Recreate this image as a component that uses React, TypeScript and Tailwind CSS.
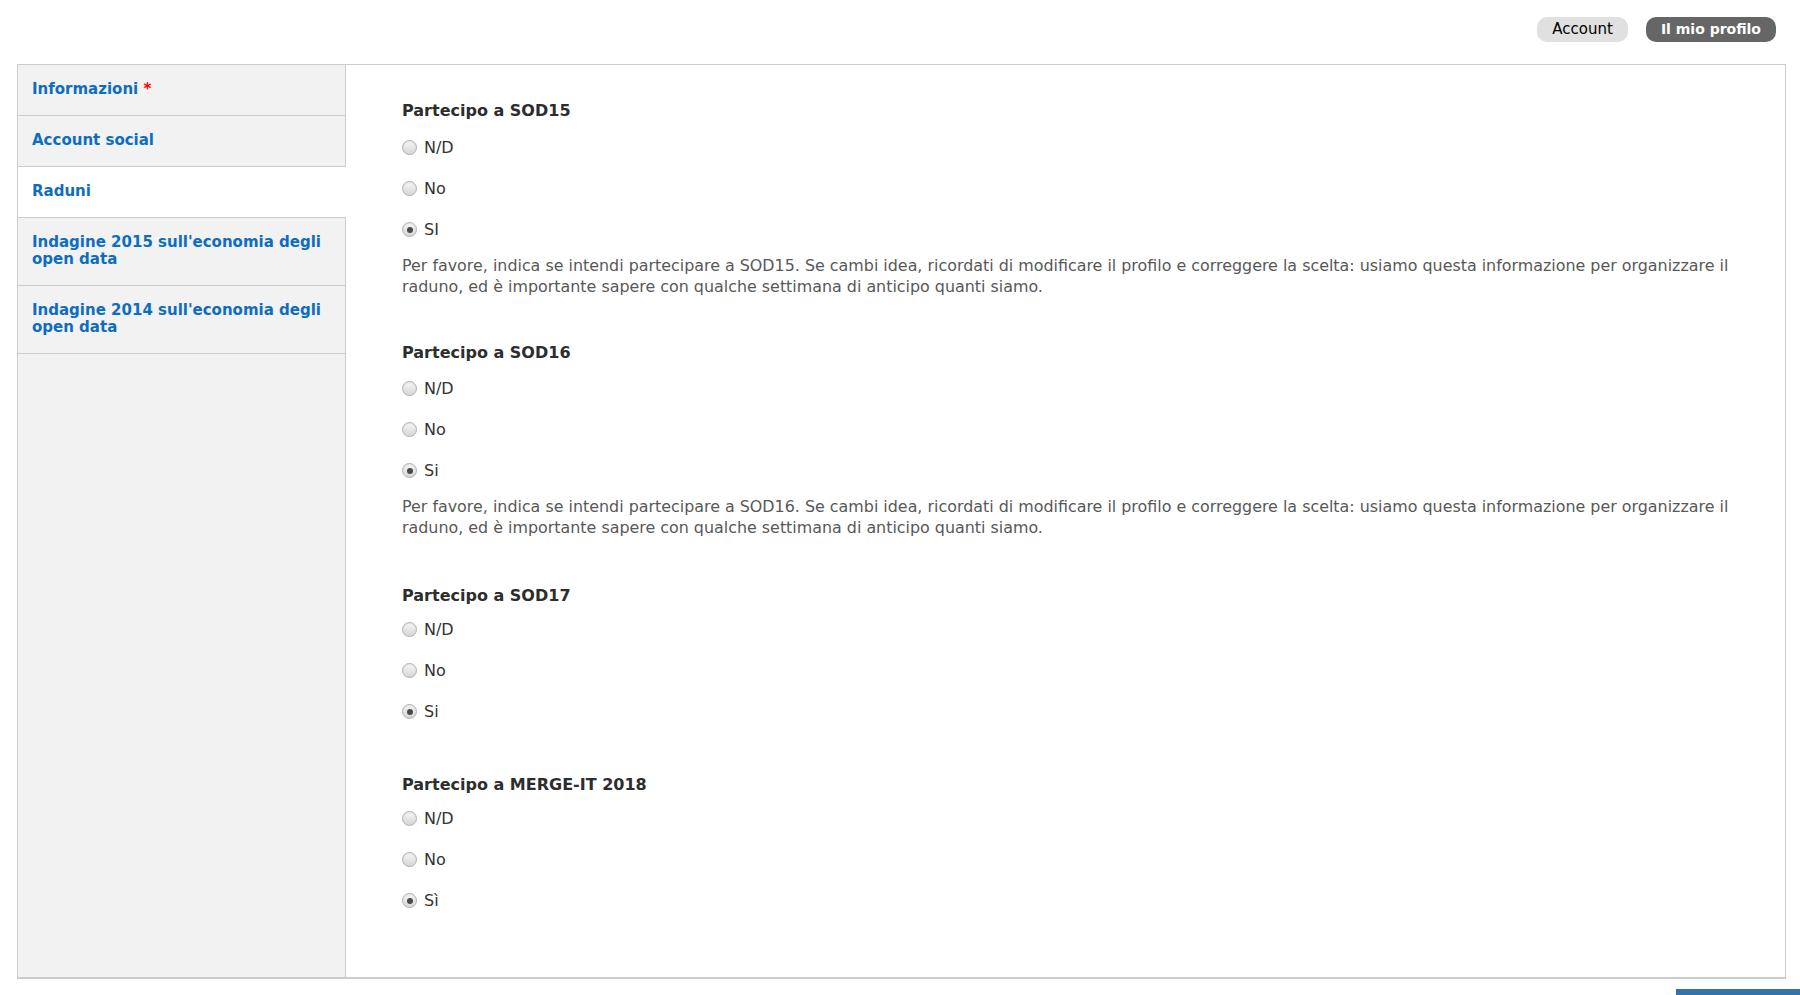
import React from "react";

type Opt = { label: string; checked?: boolean };
type Block = { title: string; options: Opt[]; desc?: string; headMb: string; blockMb: string };

const blocks: Block[] = [
  {
    title: "Partecipo a SOD15",
    options: [{ label: "N/D" }, { label: "No" }, { label: "SI", checked: true }],
    desc: "Per favore, indica se intendi partecipare a SOD15. Se cambi idea, ricordati di modificare il profilo e correggere la scelta: usiamo questa informazione per organizzare il raduno, ed è importante sapere con qualche settimana di anticipo quanti siamo.",
    headMb: "mb-[6px]",
    blockMb: "mb-[46px]",
  },
  {
    title: "Partecipo a SOD16",
    options: [{ label: "N/D" }, { label: "No" }, { label: "Si", checked: true }],
    desc: "Per favore, indica se intendi partecipare a SOD16. Se cambi idea, ricordati di modificare il profilo e correggere la scelta: usiamo questa informazione per organizzare il raduno, ed è importante sapere con qualche settimana di anticipo quanti siamo.",
    headMb: "mb-[5px]",
    blockMb: "mb-[48px]",
  },
  {
    title: "Partecipo a SOD17",
    options: [{ label: "N/D" }, { label: "No" }, { label: "Si", checked: true }],
    headMb: "mb-[3px]",
    blockMb: "mb-[43px]",
  },
  {
    title: "Partecipo a MERGE-IT 2018",
    options: [{ label: "N/D" }, { label: "No" }, { label: "Sì", checked: true }],
    headMb: "mb-[3px]",
    blockMb: "",
  },
];

function Radio({ checked }: { checked?: boolean }) {
  return (
    <span className="flex h-[15px] w-[15px] shrink-0 items-center justify-center rounded-full border border-[#b0b0b0] bg-linear-to-b from-[#f7f7f7] to-[#d6d6d6] shadow-[inset_0_1px_1px_rgba(0,0,0,0.08)]">
      {checked && <span className="h-[6px] w-[6px] rounded-full bg-[#4a4a4a]" />}
    </span>
  );
}

const tabs = [
  { label: "Informazioni", required: true },
  { label: "Account social" },
  { label: "Raduni", active: true },
  { label: "Indagine 2015 sull'economia degli open data" },
  { label: "Indagine 2014 sull'economia degli open data" },
];

export default function App() {
  return (
    <div className="min-h-screen bg-white font-['DejaVu_Sans',sans-serif]">
      <div className="flex justify-end gap-[18px] pr-[24px] pt-[17px]">
        <span className="h-[25px] rounded-[10px] bg-[#e0e0e0] px-[15px] text-[15px] leading-[25px] text-black">
          Account
        </span>
        <span className="h-[25px] rounded-[10px] bg-[#666666] px-[15px] text-[14px] font-bold leading-[25px] text-white">
          Il mio profilo
        </span>
      </div>

      <div className="ml-[17px] mr-[14px] mt-[22px] flex border border-b-2 border-[#cccccc]">
        <div className="w-[328px] shrink-0 border-r border-[#cccccc] bg-[#f2f2f2]">
          {tabs.map((t) => (
            <div
              key={t.label}
              className={
                t.active
                  ? "relative z-10 -mr-px border-b border-[#cccccc] bg-white px-[14px] pb-[17px] pt-[16px] text-[15px] font-bold leading-[17px] text-[#0e6dbf]"
                  : "border-b border-[#cccccc] px-[14px] pb-[17px] pt-[16px] text-[15px] font-bold leading-[17px] text-[#0e6dbf]"
              }
            >
              {t.label}
              {t.required && <span className="text-[#ff0000]"> *</span>}
            </div>
          ))}
        </div>

        <div className="flex-1 pb-[56px] pl-[56px] pr-[40px] pt-[36px]">
          {blocks.map((b) => (
            <div key={b.title} className={b.blockMb}>
              <div className={`${b.headMb} text-[16px] font-bold leading-[20px] text-[#2d2d2d]`}>
                {b.title}
              </div>
              {b.options.map((o) => (
                <div key={o.label} className="flex h-[41px] items-center gap-[7px]">
                  <Radio checked={o.checked} />
                  <span className="text-[16px] leading-[20px] text-[#333333]">{o.label}</span>
                </div>
              ))}
              {b.desc && (
                <p className="mt-[5px] text-[15.9px] leading-[21px] text-[#585858]">{b.desc}</p>
              )}
            </div>
          ))}
        </div>
      </div>

      <div className="mt-[10px] flex justify-end">
        <div className="h-[30px] w-[124px] bg-[#3173ab]" />
      </div>
    </div>
  );
}
